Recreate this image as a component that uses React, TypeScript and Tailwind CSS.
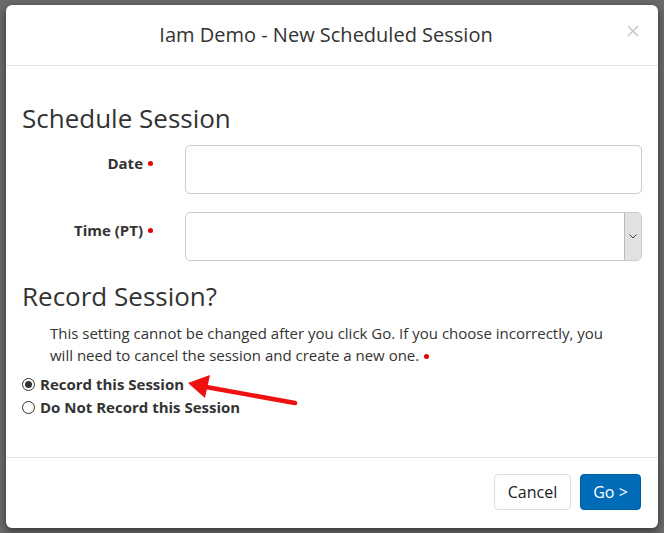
import React from "react";

const RequiredDot = () => <span className="ml-[5px] inline-block h-[5px] w-[5px] rounded-full bg-[#e60000] align-middle" />;

const FieldRow = ({ label, select }: { label: string; select?: boolean }) => {
  return (
    <div className="flex items-start">
      <div className="flex w-[163px] items-center justify-end pt-[7px] pr-[32px] text-[15px] font-bold text-[#333]">
        <span>{label}</span>
        <RequiredDot />
      </div>
      <div className="flex h-[49px] flex-1 overflow-hidden rounded-[5px] border border-[#ccc] bg-white">
        <div className="flex-1" />
        {select && (
          <div className="flex w-[17px] items-center justify-center border-l border-[#bbb] bg-[#e1e1e1]">
            <svg width="8" height="5" viewBox="0 0 8 5" fill="none" stroke="#444" strokeWidth="1">
              <path d="M0.5 0.5 L4 4 L7.5 0.5" />
            </svg>
          </div>
        )}
      </div>
    </div>
  );
};

const Radio = ({ checked, label }: { checked?: boolean; label: string }) => (
  <label className="flex items-center gap-[5px] text-[15px] font-bold leading-[23px] text-[#333]">
    <span className="flex h-[13px] w-[13px] items-center justify-center rounded-full border border-[#333] bg-white">
      {checked && <span className="h-[7px] w-[7px] rounded-full bg-[#333]" />}
    </span>
    {label}
  </label>
);

export default function App() {
  return (
    <div className="relative h-[533px] w-[664px] overflow-hidden bg-[#6a6a6a] px-[6px] pt-[5px]" style={{ fontFamily: "'Open Sans', Lato, sans-serif" }}>
      <div className="relative flex h-[523px] w-[652px] flex-col rounded-[6px] bg-white shadow-[0_3px_9px_rgba(0,0,0,0.5)]">
        {/* header */}
        <div className="flex h-[61px] items-center border-b border-[#e5e5e5] px-[15px]">
          <h4 className="flex-1 pl-[8px] text-center text-[20px] text-[#333]">Iam Demo - New Scheduled Session</h4>
          <button className="flex w-[20px] justify-center pb-[8px]">
            <svg width="12" height="12" viewBox="0 0 12 12" stroke="#c8c8c8" strokeWidth="1.6">
              <path d="M1 1 L11 11 M11 1 L1 11" />
            </svg>
          </button>
        </div>

        {/* body */}
        <div className="flex flex-1 flex-col px-[16px] pt-[35px]">
          <h3 className="text-[26px] leading-[34px] text-[#333]">Schedule Session</h3>
          <div className="mt-[10px] flex flex-col gap-[18px]">
            <FieldRow label="Date" />
            <FieldRow label="Time (PT)" select />
          </div>

          <h3 className="mt-[19px] text-[26px] leading-[32px] text-[#333]">Record Session?</h3>
          <p className="mt-[10px] pl-[28px] pr-[20px] text-[15px] leading-[22px] text-[#333]">
            This setting cannot be changed after you click Go. If you choose incorrectly, you will need to cancel the session and create a new one.
            <RequiredDot />
          </p>
          <div className="mt-[7px] flex flex-col">
            <Radio checked label="Record this Session" />
            <Radio label="Do Not Record this Session" />
          </div>
        </div>

        {/* footer */}
        <div className="flex items-center justify-end gap-[9px] border-t border-[#e5e5e5] px-[17px] pt-[16px] pb-[18px]">
          <button className="h-[36px] w-[77px] rounded-[4px] border border-[#ddd] bg-white text-[16px] text-[#222]">Cancel</button>
          <button className="h-[36px] w-[61px] rounded-[4px] border border-[#005c9e] bg-[#006cb8] text-[16px] text-white">Go &gt;</button>
        </div>

        {/* annotation arrow */}
        <svg className="absolute left-[174px] top-[355px]" width="125" height="55" viewBox="0 0 125 55">
          <path d="M26 27 L115 43" stroke="#ee1111" strokeWidth="4.5" strokeLinecap="round" />
          <polygon points="8,23 30,15 25,38" fill="#ee1111" />
        </svg>
      </div>
    </div>
  );
}
